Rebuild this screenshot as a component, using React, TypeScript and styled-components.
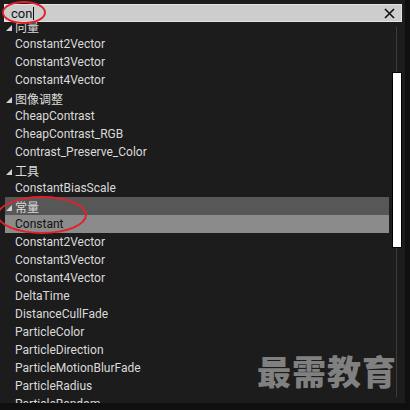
import React from 'react';
import styled, { createGlobalStyle } from 'styled-components';

const GlobalStyle = createGlobalStyle`
    body {
        margin: 0;
        background: #0f0f0f;
        font-family: Roboto, 'Noto Sans CJK SC', sans-serif;
    }
`;

const Frame = styled.div`
    width: 410px;
    height: 410px;
    background: #0f0f0f;
    position: relative;
    overflow: hidden;
`;

const Panel = styled.div`
    width: 405px;
    height: 403px;
    background: #1c1c1c;
    display: flex;
    flex-direction: column;
    box-sizing: border-box;
    padding: 4px 3px 0 4px;
`;

const SearchBar = styled.div`
    height: 18px;
    box-sizing: border-box;
    background: #cdcdcd;
    border: 1px solid #e4e4e4;
    display: flex;
    align-items: center;
    padding: 0 6px 0 6px;
    flex-shrink: 0;
`;

const SearchText = styled.span`
    font-size: 13px;
    color: #111;
    flex: 1;
    display: flex;
    align-items: center;
    & > i {
        display: inline-block;
        width: 1px;
        height: 13px;
        background: #111;
        margin-left: 1px;
    }
`;

const Body = styled.div`
    flex: 1;
    display: flex;
    overflow: hidden;
`;

const List = styled.div`
    flex: 1;
    overflow: hidden;
    padding-left: 1px;
`;

const ListInner = styled.div`
    margin-top: -5px;
`;

const Row = styled.div<{ $bg?: string; $dark?: boolean }>`
    height: 18px;
    display: flex;
    align-items: center;
    padding-left: 10px;
    font-size: 12px;
    color: ${(p) => (p.$dark ? '#111' : '#dadada')};
    background: ${(p) => p.$bg || 'transparent'};
    white-space: nowrap;
    margin-right: 2px;
`;

const Header = styled(Row)`
    padding-left: 1px;
    & > b {
        width: 0;
        height: 0;
        border-left: 6px solid transparent;
        border-bottom: 6px solid #d0d0d0;
        margin: 3px 3px 0 0;
    }
`;

const Scrollbar = styled.div`
    width: 11px;
    display: flex;
    flex-direction: column;
    align-items: center;
    padding-top: 5px;
    padding-bottom: 6px;
`;

const Track = styled.div<{ $h?: number }>`
    width: 1px;
    background: #3c3c3c;
    height: ${(p) => (p.$h ? p.$h + 'px' : 'auto')};
    flex: ${(p) => (p.$h ? '0 0 auto' : '1')};
`;

const Thumb = styled.div`
    width: 10px;
    height: 176px;
    box-sizing: border-box;
    background: #fff;
    border: 1px solid #000;
`;

const Watermark = styled.div`
    position: absolute;
    left: 257px;
    top: 346px;
    font-family: 'Noto Sans CJK SC', sans-serif;
    font-weight: 900;
    font-size: 34px;
    letter-spacing: 1px;
    color: #808080;
`;

const Mark = styled.div<{ $x: number; $y: number; $w: number; $h: number }>`
    position: absolute;
    left: ${(p) => p.$x}px;
    top: ${(p) => p.$y}px;
    width: ${(p) => p.$w}px;
    height: ${(p) => p.$h}px;
    box-sizing: border-box;
    border: 2px solid #e3212b;
    border-radius: 50%;
`;

type Item = { text: string; head?: boolean; bg?: string; dark?: boolean };

const items: Item[] = [
    { text: '向量', head: true },
    { text: 'Constant2Vector' },
    { text: 'Constant3Vector' },
    { text: 'Constant4Vector' },
    { text: '图像调整', head: true },
    { text: 'CheapContrast' },
    { text: 'CheapContrast_RGB' },
    { text: 'Contrast_Preserve_Color' },
    { text: '工具', head: true },
    { text: 'ConstantBiasScale' },
    { text: '常量', head: true, bg: '#575757' },
    { text: 'Constant', bg: '#8b8b8b', dark: true },
    { text: 'Constant2Vector' },
    { text: 'Constant3Vector' },
    { text: 'Constant4Vector' },
    { text: 'DeltaTime' },
    { text: 'DistanceCullFade' },
    { text: 'ParticleColor' },
    { text: 'ParticleDirection' },
    { text: 'ParticleMotionBlurFade' },
    { text: 'ParticleRadius' },
    { text: 'ParticleRandom' },
];

export default function App() {
    return (
        <>
            <GlobalStyle />
            <Frame>
                <Panel>
                    <SearchBar>
                        <SearchText>
                            con<i />
                        </SearchText>
                        <svg width='11' height='11' viewBox='0 0 11 11'>
                            <path
                                d='M1 1 L10 10 M10 1 L1 10'
                                stroke='#111'
                                strokeWidth='1.6'
                            />
                        </svg>
                    </SearchBar>
                    <Body>
                        <List>
                            <ListInner>
                                {items.map((it, i) =>
                                    it.head ? (
                                        <Header key={i} $bg={it.bg}>
                                            <b />
                                            {it.text}
                                        </Header>
                                    ) : (
                                        <Row key={i} $bg={it.bg} $dark={it.dark}>
                                            {it.text}
                                        </Row>
                                    )
                                )}
                            </ListInner>
                        </List>
                        <Scrollbar>
                            <Track $h={45} />
                            <Thumb />
                            <Track />
                        </Scrollbar>
                    </Body>
                </Panel>
                <Watermark>最需教育</Watermark>
                <Mark $x={2} $y={1} $w={44} $h={23} />
                <Mark $x={-3} $y={196} $w={90} $h={38} />
            </Frame>
        </>
    );
}
